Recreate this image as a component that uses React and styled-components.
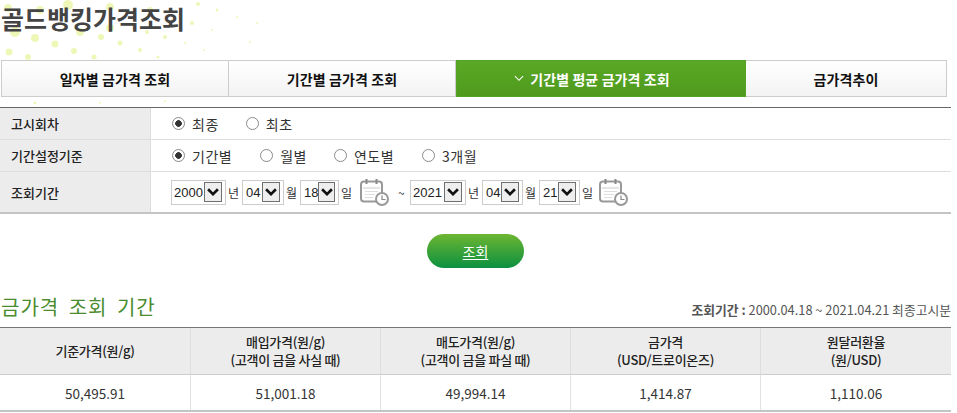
import React from 'react'
import styled, { createGlobalStyle } from 'styled-components'

const FONT = `'Noto Sans CJK KR', 'Noto Sans', sans-serif`

const GlobalStyle = createGlobalStyle`
  html, body {
    margin: 0;
    padding: 0;
    background: #fff;
  }
  body {
    font-family: ${FONT};
    color: #222;
    overflow: hidden;
  }
`

const Page = styled.div`
  position: relative;
  width: 957px;
  height: 413px;
  overflow: hidden;
`

const Dots = styled.svg`
  position: absolute;
  left: 0;
  top: 0;
  z-index: 0;
`

const Content = styled.div`
  position: relative;
  z-index: 1;
`

const Title = styled.h2`
  margin: 0;
  height: 60px;
  padding-left: 1px;
  font-size: 25px;
  line-height: 37px;
  font-weight: 700;
  color: #444;
`

const Tabs = styled.div`
  display: grid;
  grid-template-columns: 228px 227px 290px 201px;
  margin-left: 1px;
  width: 946px;
  height: 37px;
`

const Tab = styled.div`
  display: flex;
  align-items: center;
  justify-content: center;
  gap: 6px;
  box-sizing: border-box;
  padding-right: ${({ $active }) => ($active ? '18px' : '0')};
  border: 1px solid ${({ $active }) => ($active ? '#55a324' : '#ccc')};
  border-left-width: ${({ $first, $active }) => ($first || $active ? '1px' : '0')};
  background: ${({ $active }) =>
    $active ? 'linear-gradient(#5aa825, #4f9a1e)' : 'linear-gradient(#fff, #f3f3f3)'};
  color: ${({ $active }) => ($active ? '#fff' : '#111')};
  font-size: 14px;
  letter-spacing: 0.1px;
  font-weight: 700;
`

const SearchTable = styled.table`
  width: 951px;
  margin-top: 10px;
  border-collapse: separate;
  border-spacing: 0;
  table-layout: fixed;
  border-top: 1px solid #666;
  border-bottom: 2px solid #c4c4c4;
`

const SearchRow = styled.tr`
  height: ${({ $h }) => $h}px;
  &:not(:last-child) > * {
    border-bottom: 1px solid #ddd;
  }
`

const RowLabel = styled.th`
  width: 151px;
  box-sizing: border-box;
  padding: 0 0 0 11px;
  background: #ececec;
  border-right: 1px solid #ddd;
  text-align: left;
  font-size: 13px;
  font-weight: 500;
  color: #222;
`

const RowValue = styled.td`
  padding: 0 0 0 20px;
`

const Inline = styled.div`
  display: flex;
  align-items: center;
`

const RadioLabel = styled.label`
  display: flex;
  align-items: center;
  margin-right: ${({ $gap }) => $gap}px;
  padding-left: 1px;
  font-size: 14px;
  letter-spacing: 0.5px;
  color: #333;
`

const Radio = styled.input.attrs({ type: 'radio', readOnly: true })`
  appearance: none;
  box-sizing: border-box;
  width: 13px;
  height: 13px;
  margin: 0 7px 0 0;
  border: 1px solid #8a8a8a;
  border-radius: 50%;
  background: #fff;
  &:checked {
    background: radial-gradient(circle, #333 0 3px, #fff 3.6px);
  }
`

const SelectBox = styled.div`
  display: flex;
  align-items: center;
  justify-content: space-between;
  box-sizing: border-box;
  width: ${({ $w }) => $w}px;
  height: 25px;
  padding: 0 3px 0 ${({ $pad }) => $pad}px;
  border: 1px solid #ccc;
  font-family: 'Liberation Sans', sans-serif;
  font-size: 13px;
  color: #222;
`

const SelectArrow = styled.span`
  display: flex;
  align-items: center;
  justify-content: center;
  box-sizing: border-box;
  width: 18px;
  height: 20px;
  border: 1px solid #707070;
  background: #eee;
`

const Unit = styled.span`
  width: 16px;
  padding-left: 2px;
  box-sizing: border-box;
  font-size: 12px;
  color: #333;
`

const Tilde = styled.span`
  width: 21px;
  padding-left: 9px;
  box-sizing: border-box;
  font-size: 12px;
  color: #333;
`

const Calendar = styled.svg`
  flex: none;
  margin-left: ${({ $ml }) => $ml}px;
`

const ButtonRow = styled.div`
  display: flex;
  justify-content: center;
  margin-top: 20px;
  padding-right: 6px;
`

const SearchButton = styled.a`
  display: flex;
  align-items: center;
  justify-content: center;
  width: 97px;
  height: 34px;
  border-radius: 17px;
  background: linear-gradient(#6db632, #0b9040);
  color: #fff;
  font-size: 14px;
  text-decoration: underline;
  text-underline-offset: 2px;
`

const SectionHead = styled.div`
  display: flex;
  align-items: flex-end;
  justify-content: space-between;
  width: 951px;
  height: 38px;
  margin-top: 21px;
`

const SectionTitle = styled.h3`
  margin: 0 0 5px;
  padding-left: 1px;
  font-size: 20px;
  line-height: 30px;
  font-weight: 400;
  letter-spacing: 1px;
  word-spacing: 4px;
  color: #4a8c2e;
`

const PeriodNote = styled.p`
  margin: 0 0 9px;
  font-size: 12.8px;
  line-height: 16px;
  color: #555;
  & b {
    font-weight: 700;
  }
`

const PriceTable = styled.table`
  width: 951px;
  border-collapse: separate;
  border-spacing: 0;
  table-layout: fixed;
  border-top: 1px solid #777;
  border-bottom: 2px solid #c4c4c4;
`

const PriceHead = styled.th`
  box-sizing: border-box;
  height: 47px;
  padding: 0;
  background: #ececec;
  border-left: 1px solid #ddd;
  border-bottom: 1px solid #ccc;
  font-size: 13px;
  letter-spacing: -0.3px;
  line-height: 18px;
  font-weight: 500;
  color: #222;
  &:first-child {
    border-left: 0;
  }
  &:not(:last-child) {
    width: 190px;
  }
`

const PriceCell = styled.td`
  height: 35px;
  padding: 0;
  border-left: 1px solid #e2e2e2;
  text-align: center;
  font-size: 13.5px;
  color: #333;
  &:first-child {
    border-left: 0;
  }
`

const dots = [
  [35, 38, 4], [15, 32, 5], [55, 44, 3.5], [9, 52, 3.5], [74, 51, 3], [101, 37, 3], [80, 32, 4],
  [110, 28, 4], [120, 43, 2.5], [94, 57, 2.5], [140, 50, 2], [165, 37, 2], [192, 23, 2],
  [147, 32, 2], [198, 4, 2], [217, 10, 1.5], [212, 30, 1], [185, 43, 1], [158, 57, 1.5],
  [28, 57, 3], [68, 5, 5], [110, 7, 4], [40, 10, 4], [8, 8, 4], [150, 10, 3], [237, 17, 1],
  [257, 23, 1], [35, 103, 1.5], [100, 103, 1], [165, 101, 1], [204, 50, 1], [250, 42, 1],
]

const tabs = ['일자별 금가격 조회', '기간별 금가격 조회', '기간별 평균 금가격 조회', '금가격추이']

const priceCols = [
  { head: ['기준가격(원/g)'], value: '50,495.91' },
  { head: ['매입가격(원/g)', '(고객이 금을 사실 때)'], value: '51,001.18' },
  { head: ['매도가격(원/g)', '(고객이 금을 파실 때)'], value: '49,994.14' },
  { head: ['금가격', '(USD/트로이온즈)'], value: '1,414.87' },
  { head: ['원달러환율', '(원/USD)'], value: '1,110.06' },
]

function Chevron({ color = '#111', width = 12, height = 8, stroke = 2.4 }) {
  return (
    <svg width={width} height={height} viewBox="0 0 11 7">
      <path d="M1 1 L5.5 5.5 L10 1" fill="none" stroke={color} strokeWidth={stroke} />
    </svg>
  )
}

function CalendarIcon({ left }) {
  return (
    <Calendar $ml={left} width="29" height="28" viewBox="0 0 29 28">
      <rect x="1" y="3.5" width="21" height="20" rx="3" fill="#fff" stroke="#999" strokeWidth="2" />
      <path d="M6.5 1 V6 M16.5 1 V6" stroke="#888" strokeWidth="2" />
      <path d="M3 10 H20" stroke="#ccc" strokeWidth="1" />
      <path d="M5 13.5 H18 M5 16.5 H15 M5 19.5 H13" stroke="#ddd" strokeWidth="1" />
      <circle cx="22" cy="21" r="6" fill="#fff" stroke="#999" strokeWidth="2" />
      <path d="M22 17.5 V21.5 H25.5" fill="none" stroke="#888" strokeWidth="1.2" />
    </Calendar>
  )
}

function DateSelect({ value, width }) {
  return (
    <SelectBox $w={width} $pad={value.length > 2 ? 2 : 3}>
      <span>{value}</span>
      <SelectArrow>
        <Chevron />
      </SelectArrow>
    </SelectBox>
  )
}

export default function App() {
  return (
    <Page>
      <GlobalStyle />
      <Dots width="300" height="110" viewBox="0 0 300 110">
        {dots.map(([cx, cy, r], i) => (
          <circle key={i} cx={cx} cy={cy} r={r} fill="#eef7b8" />
        ))}
      </Dots>
      <Content>
        <Title>골드뱅킹가격조회</Title>
        <Tabs>
          {tabs.map((label, i) => (
            <Tab key={label} $first={i === 0} $active={i === 2}>
              {i === 2 && <Chevron color="#fff" width={10} height={7} stroke={1.2} />}
              {label}
            </Tab>
          ))}
        </Tabs>
        <SearchTable>
          <tbody>
            <SearchRow $h={32}>
              <RowLabel>고시회차</RowLabel>
              <RowValue>
                <Inline>
                  <RadioLabel $gap={26}><Radio name="a" defaultChecked />최종</RadioLabel>
                  <RadioLabel $gap={0}><Radio name="a" />최초</RadioLabel>
                </Inline>
              </RowValue>
            </SearchRow>
            <SearchRow $h={32}>
              <RowLabel>기간설정기준</RowLabel>
              <RowValue>
                <Inline>
                  <RadioLabel $gap={27}><Radio name="b" defaultChecked />기간별</RadioLabel>
                  <RadioLabel $gap={26}><Radio name="b" />월별</RadioLabel>
                  <RadioLabel $gap={27}><Radio name="b" />연도별</RadioLabel>
                  <RadioLabel $gap={0}><Radio name="b" />3개월</RadioLabel>
                </Inline>
              </RowValue>
            </SearchRow>
            <SearchRow $h={40}>
              <RowLabel>조회기간</RowLabel>
              <RowValue>
                <Inline>
                  <DateSelect value="2000" width={55} />
                  <Unit>년</Unit>
                  <DateSelect value="04" width={42} />
                  <Unit>월</Unit>
                  <DateSelect value="18" width={39} />
                  <Unit>일</Unit>
                  <CalendarIcon left={5} />
                  <Tilde>~</Tilde>
                  <DateSelect value="2021" width={56} />
                  <Unit>년</Unit>
                  <DateSelect value="04" width={41} />
                  <Unit>월</Unit>
                  <DateSelect value="21" width={41} />
                  <Unit>일</Unit>
                  <CalendarIcon left={3} />
                </Inline>
              </RowValue>
            </SearchRow>
          </tbody>
        </SearchTable>
        <ButtonRow>
          <SearchButton>조회</SearchButton>
        </ButtonRow>
        <SectionHead>
          <SectionTitle>금가격 조회 기간</SectionTitle>
          <PeriodNote><b>조회기간 :</b> 2000.04.18 ~ 2021.04.21 최종고시분</PeriodNote>
        </SectionHead>
        <PriceTable>
          <thead>
            <tr>
              {priceCols.map((col) => (
                <PriceHead key={col.value}>
                  {col.head.map((line) => (
                    <div key={line}>{line}</div>
                  ))}
                </PriceHead>
              ))}
            </tr>
          </thead>
          <tbody>
            <tr>
              {priceCols.map((col) => (
                <PriceCell key={col.value}>{col.value}</PriceCell>
              ))}
            </tr>
          </tbody>
        </PriceTable>
      </Content>
    </Page>
  )
}
